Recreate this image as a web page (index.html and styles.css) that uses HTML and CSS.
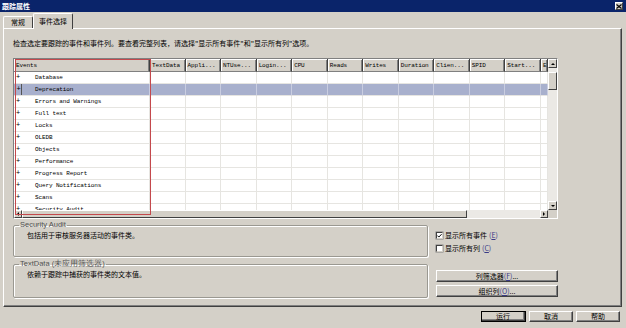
FILE: index.html
```html
<!DOCTYPE html>
<html>
	<head>
		<meta charset="utf-8">
		<title>跟踪属性</title>
		<link rel="stylesheet" href="styles.css">
	</head>
	<body>
		<div class="titlebar">
			<span class="title">跟踪属性</span>
			<span class="close">
				<svg width="6" height="5" viewBox="0 0 6 5"><path d="M0.5 0.5 L5.5 4.5 M5.5 0.5 L0.5 4.5" stroke="#000" stroke-width="1.1"/></svg>
			</span>
		</div>
		<div class="tabs">
			<div class="tab">常规</div>
			<div class="tab active">事件选择</div>
		</div>
		<div class="panel">
			<div class="hint">检查选定要跟踪的事件和事件列。要查看完整列表，请选择"显示所有事件"和"显示所有列"选项。</div>
			<div class="grid">
				<div class="viewport">
					<table class="events">
						<colgroup>
							<col class="c-name">
							<col span="11" class="c-col">
							<col class="c-e">
						</colgroup>
						<thead>
							<tr><th>Events</th><th>TextData</th><th>Appli...</th><th>NTUse...</th><th>Login...</th><th>CPU</th><th>Reads</th><th>Writes</th><th>Duration</th><th>Clien...</th><th>SPID</th><th>Start...</th><th>E</th></tr>
						</thead>
						<tbody>
							<tr><td><span class="plus">+</span>Database</td><td></td><td></td><td></td><td></td><td></td><td></td><td></td><td></td><td></td><td></td><td></td><td></td></tr>
							<tr class="selected"><td><span class="plus focus">+</span>Deprecation</td><td></td><td></td><td></td><td></td><td></td><td></td><td></td><td></td><td></td><td></td><td></td><td></td></tr>
							<tr><td><span class="plus">+</span>Errors and Warnings</td><td></td><td></td><td></td><td></td><td></td><td></td><td></td><td></td><td></td><td></td><td></td><td></td></tr>
							<tr><td><span class="plus">+</span>Full text</td><td></td><td></td><td></td><td></td><td></td><td></td><td></td><td></td><td></td><td></td><td></td><td></td></tr>
							<tr><td><span class="plus">+</span>Locks</td><td></td><td></td><td></td><td></td><td></td><td></td><td></td><td></td><td></td><td></td><td></td><td></td></tr>
							<tr><td><span class="plus">+</span>OLEDB</td><td></td><td></td><td></td><td></td><td></td><td></td><td></td><td></td><td></td><td></td><td></td><td></td></tr>
							<tr><td><span class="plus">+</span>Objects</td><td></td><td></td><td></td><td></td><td></td><td></td><td></td><td></td><td></td><td></td><td></td><td></td></tr>
							<tr><td><span class="plus">+</span>Performance</td><td></td><td></td><td></td><td></td><td></td><td></td><td></td><td></td><td></td><td></td><td></td><td></td></tr>
							<tr><td><span class="plus">+</span>Progress Report</td><td></td><td></td><td></td><td></td><td></td><td></td><td></td><td></td><td></td><td></td><td></td><td></td></tr>
							<tr><td><span class="plus">+</span>Query Notifications</td><td></td><td></td><td></td><td></td><td></td><td></td><td></td><td></td><td></td><td></td><td></td><td></td></tr>
							<tr><td><span class="plus">+</span>Scans</td><td></td><td></td><td></td><td></td><td></td><td></td><td></td><td></td><td></td><td></td><td></td><td></td></tr>
							<tr><td><span class="plus">+</span>Security Audit</td><td></td><td></td><td></td><td></td><td></td><td></td><td></td><td></td><td></td><td></td><td></td><td></td></tr>
						</tbody>
					</table>
				</div>
				<div class="vscroll">
					<div class="arrow up"><i></i></div>
					<div class="track">
						<div class="thumb"></div>
					</div>
					<div class="arrow down"><i></i></div>
				</div>
				<div class="hscroll">
					<div class="arrow left"><i></i></div>
					<div class="hthumb"></div>
					<div class="htrack"></div>
					<div class="arrow right"><i></i></div>
				</div>
				<div class="corner"></div>
				<div class="mark"></div>
			</div>
			<div class="lower">
				<div class="groups">
					<fieldset class="group first">
						<legend>Security Audit</legend>
						<p>包括用于审核服务器活动的事件类。</p>
					</fieldset>
					<fieldset class="group second">
						<legend>TextData (未应用筛选器)</legend>
						<p>依赖于跟踪中捕获的事件类的文本值。</p>
					</fieldset>
				</div>
				<div class="side">
					<div class="check"><span class="box checked"><svg width="6" height="6" viewBox="0 0 6 6"><path d="M0.5 2.5 L2.2 4.3 L5.5 0.8" fill="none" stroke="#000" stroke-width="1.2"/></svg></span>显示所有事件<span class="key">(<u>E</u>)</span></div>
					<div class="check"><span class="box"></span>显示所有列<span class="key">(<u>C</u>)</span></div>
					<button class="btn wide first-btn">列筛选器<span class="key">(<u>F</u>)</span>...</button>
					<button class="btn wide">组织列<span class="key">(<u>O</u>)</span>...</button>
				</div>
			</div>
		</div>
		<div class="actions">
			<button class="btn default">运行</button>
			<button class="btn">取消</button>
			<button class="btn">帮助</button>
		</div>
	</body>
</html>
```

FILE: styles.css
```css
body {
	margin: 0;
	width: 626px;
	height: 328px;
	overflow: hidden;
	background-color: #d4d0c8;
	color: #000;
	font-family: "Noto Sans CJK SC", sans-serif;
	font-size: 7px;
}

.titlebar {
	height: 12px;
	background-color: #0a246a;
	display: flex;
	align-items: center;
	justify-content: space-between;
	padding: 0 3px 0 2px;
}

.title {
	color: #fff;
	font-weight: bold;
	font-size: 7px;
	line-height: 12px;
}

.close {
	width: 8px;
	height: 8px;
	box-sizing: border-box;
	background-color: #d4d0c8;
	border: 1px solid;
	border-color: #fff #404040 #404040 #fff;
	display: flex;
	align-items: center;
	justify-content: center;
}

.close svg {
	display: block;
}

/* tabs */

.tabs {
	height: 16px;
	display: flex;
	align-items: flex-end;
	padding-left: 3px;
}

.tab {
	position: relative;
	height: 12px;
	box-sizing: border-box;
	width: 30px;
	border: 1px solid;
	border-color: #fff #404040 transparent #fff;
	border-bottom: none;
	border-radius: 2px 2px 0 0;
	text-align: center;
	line-height: 11px;
	font-size: 7px;
}

.tab.active {
	width: 40px;
	height: 16px;
	margin-bottom: -1px;
	line-height: 14px;
	background-color: #d4d0c8;
	z-index: 1;
}

/* panel */

.panel {
	margin: 0 4px 0 3px;
	height: 279px;
	box-sizing: border-box;
	border: 1px solid;
	border-color: #fff #404040 #404040 #fff;
	box-shadow: inset -1px -1px 0 #808080;
	padding-left: 9px;
}

.hint {
	margin-top: 10px;
	height: 9px;
	line-height: 9px;
	font-size: 7px;
	white-space: nowrap;
}

/* event grid */

.grid {
	position: relative;
	margin-top: 10px;
	width: 545px;
	height: 161px;
	box-sizing: border-box;
	border: 1px solid;
	border-color: #808080 #fff #fff #808080;
	display: grid;
	grid-template-columns: 534px 9px;
	grid-template-rows: 151px 8px;
	background-color: #fff;
}

.viewport {
	overflow: hidden;
}

.events {
	table-layout: fixed;
	width: 534px;
	border-collapse: separate;
	border-spacing: 0;
	font-family: "Liberation Mono", monospace;
	font-size: 6px;
	letter-spacing: -0.12px;
}

.c-name {
	width: 136px;
}

.c-col {
	width: 35.545px;
}

.c-e {
	width: 7px;
}

.events th {
	height: 13px;
	box-sizing: border-box;
	padding: 0 0 0 2px;
	font-weight: normal;
	text-align: left;
	white-space: nowrap;
	overflow: hidden;
	background-color: #d4d0c8;
	border-right: 1px solid #404040;
	border-bottom: 1px solid #808080;
	box-shadow: inset 1px 1px 0 #fff, inset -1px 0 0 #808080;
	line-height: 11px;
}

.events td {
	height: 12px;
	box-sizing: border-box;
	padding: 0 0 0 2px;
	line-height: 11px;
	white-space: nowrap;
	overflow: hidden;
	border-right: 1px solid #e6e5e1;
	border-bottom: 1px solid #e6e5e1;
}

.events .selected td {
	background-color: #a8b0cd;
	border-right-color: #c9cde0;
}

.plus {
	display: inline-block;
	width: 19px;
	font-size: 7px;
}

.plus.focus {
	outline: 1px solid #555;
	outline-offset: 0;
	width: 5px;
	margin-right: 14px;
	text-align: center;
}

/* scrollbars */

.vscroll {
	display: flex;
	flex-direction: column;
	background-color: #ebe9e5;
}

.vscroll .track {
	flex: 1;
	padding-top: 4px;
}

.thumb {
	height: 18px;
	box-sizing: border-box;
	background-color: #d4d0c8;
	border: 1px solid;
	border-color: #fff #404040 #404040 #fff;
}

.hscroll {
	display: flex;
	background-color: #ebe9e5;
}

.hthumb {
	width: 445px;
	box-sizing: border-box;
	background-color: #d4d0c8;
	border: 1px solid;
	border-color: #fff #404040 #404040 #fff;
}

.htrack {
	flex: 1;
}

.corner {
	background-color: #d4d0c8;
}

.arrow {
	width: 9px;
	height: 9px;
	flex: none;
	box-sizing: border-box;
	background-color: #d4d0c8;
	border: 1px solid;
	border-color: #fff #404040 #404040 #fff;
	display: flex;
	align-items: center;
	justify-content: center;
}

.hscroll .arrow {
	width: 8px;
	height: 8px;
}

.arrow i {
	width: 0;
	height: 0;
	border: 2px solid transparent;
}

.arrow.up i {
	border-bottom-color: #000;
	border-top-width: 0;
}

.arrow.down i {
	border-top-color: #000;
	border-bottom-width: 0;
}

.arrow.left i {
	border-right-color: #000;
	border-left-width: 0;
}

.arrow.right i {
	border-left-color: #000;
	border-right-width: 0;
}

.mark {
	position: absolute;
	left: 1px;
	top: 0;
	width: 136px;
	height: 156px;
	box-sizing: border-box;
	border: 1px solid #c4484c;
	pointer-events: none;
}

/* lower part */

.lower {
	display: flex;
	gap: 8px;
	margin-top: 2px;
}

.groups {
	width: 415px;
}

.group {
	margin: 0;
	padding: 0 0 0 5px;
	box-sizing: border-box;
	border: 1px solid #9a9891;
	border-radius: 2px;
	box-shadow: 1px 1px 0 #fff, inset 1px 1px 0 #fff;
}

.group.first {
	height: 36px;
}

.group.second {
	height: 38px;
	margin-top: 3px;
}

.group legend {
	padding: 0 1px;
	font-family: "Liberation Sans", sans-serif;
	font-size: 7.5px;
	line-height: 8px;
	color: #505050;
}

.group p {
	margin: 2px 0 0 8px;
	line-height: 9px;
}

.side {
	width: 122px;
	padding-top: 8px;
}

.check {
	height: 13px;
	display: flex;
	align-items: center;
	gap: 2px;
	line-height: 9px;
}

.box {
	width: 7px;
	height: 7px;
	box-sizing: border-box;
	background-color: #fff;
	border: 1px solid;
	border-color: #404040 #d4d0c8 #d4d0c8 #404040;
	box-shadow: 0 0 0 0.5px #808080;
	display: flex;
	align-items: center;
	justify-content: center;
}

.box svg {
	display: block;
}

.key {
	color: #3a3a86;
}

.btn {
	display: block;
	height: 12px;
	box-sizing: border-box;
	padding: 0;
	font-family: "Noto Sans CJK SC", sans-serif;
	font-size: 7px;
	line-height: 10px;
	color: #000;
	background-color: #d4d0c8;
	border: 1px solid;
	border-color: #fff #404040 #404040 #fff;
	box-shadow: inset -1px -1px 0 #808080;
}

.btn.wide {
	width: 122px;
	margin-top: 3px;
}

.btn.first-btn {
	margin-top: 15px;
}

/* dialog buttons */

.actions {
	display: flex;
	justify-content: flex-end;
	gap: 3px;
	margin-top: 4px;
	padding-right: 6px;
}

.actions .btn {
	width: 44px;
	height: 11px;
	line-height: 9px;
}

.actions .btn.default {
	outline: 1px solid #000;
	outline-offset: -1px;
	border-color: #fff #404040 #404040 #fff;
	border-width: 1px 2px 2px 1px;
	width: 45px;
}
```
